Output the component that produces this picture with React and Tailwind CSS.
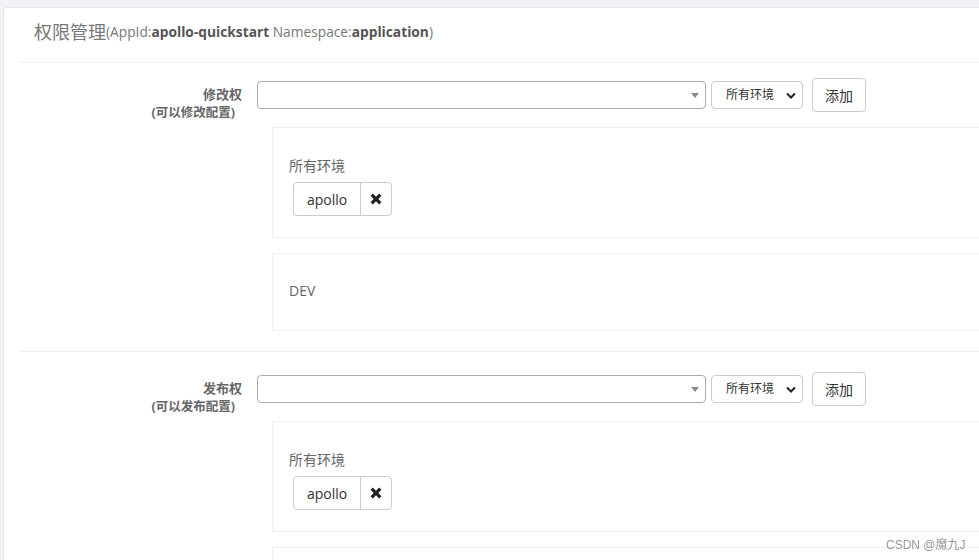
import React from 'react';

const font = { fontFamily: '"Open Sans", "Noto Sans CJK SC", sans-serif' };

const RemoveIcon = () => (
  <svg width="14" height="14" viewBox="0 0 12 12">
    <path d="M1.3 3.3 L3.3 1.3 L6 4 L8.7 1.3 L10.7 3.3 L8 6 L10.7 8.7 L8.7 10.7 L6 8 L3.3 10.7 L1.3 8.7 L4 6 Z" fill="#222" />
  </svg>
);

const Tag = ({ name }) => (
  <div className="inline-flex h-[34px] rounded border border-[#ccc] text-[14px] text-[#333]">
    <span className="flex items-center px-[13px]">{name}</span>
    <span className="flex w-[31px] items-center justify-center border-l border-[#ccc]">
      <RemoveIcon />
    </span>
  </div>
);

const EnvPanel = ({ env, users, className = '' }) => (
  <div className={`border border-[#eee] bg-white px-[16px] ${className}`}>
    <div className="text-[14px] leading-[18px] text-[#666]">{env}</div>
    {users.length > 0 && (
      <div className="mt-[7px] ml-[4px] flex gap-2">
        {users.map((u) => (
          <Tag key={u} name={u} />
        ))}
      </div>
    )}
  </div>
);

const PermRow = ({ title, sub }) => (
  <div className="flex items-start">
    <div className="w-[238px] shrink-0 pr-[15px] pt-[7px] text-right font-bold leading-[18px] text-[#666]">
      <div className="text-[13px]">{title}</div>
      <div className="mt-[1px] pr-[7px] text-[12.5px]">{sub}</div>
    </div>
    <div className="flex items-center gap-[5px]">
      <div className="relative h-[28px] w-[449px] rounded border border-[#aaa] bg-white">
        <svg className="absolute right-[6px] top-[11px]" width="8" height="5" viewBox="0 0 8 5">
          <path d="M0 0 H8 L4 5 Z" fill="#888" />
        </svg>
      </div>
      <div className="flex h-[28px] w-[92px] items-center justify-between rounded border border-[#ccc] bg-white pl-[14px] pr-[6px] text-[12px] text-[#333]">
        <span>所有环境</span>
        <svg width="10" height="7" viewBox="0 0 10 7">
          <path d="M1 1.5 L5 5.5 L9 1.5" fill="none" stroke="#222" strokeWidth="2" />
        </svg>
      </div>
      <button className="ml-[4px] h-[34px] w-[54px] rounded border border-[#ccc] bg-white text-[14px] text-[#333]">
        添加
      </button>
    </div>
  </div>
);

export default function App() {
  return (
    <div className="h-[560px] w-[979px] overflow-hidden bg-[#f1f2f6]" style={font}>
      <div className="ml-[3px] mt-[7px] h-[600px] w-[1100px] rounded-tl-[4px] border-l border-t border-[#e4e6ea] bg-white">
        <div className="flex h-[54px] items-start pl-[30px] pt-[12px] text-[#777]">
          <span className="text-[18px] leading-[24px]">权限管理</span>
          <span className="text-[13.75px] leading-[24px]">
            (AppId:<b className="text-[#555]">apollo-quickstart</b> Namespace:<b className="text-[#555]">application</b>)
          </span>
        </div>
        <div className="ml-[15px] border-t border-[#eee] pt-[15px]">
          <PermRow title="修改权" sub="(可以修改配置)" />
          <div className="ml-[253px] mt-[5px] flex flex-col gap-[15px]">
            <EnvPanel env="所有环境" users={['apollo']} className="h-[111px] pt-[29px]" />
            <EnvPanel env="DEV" users={[]} className="h-[78px] pt-[28px]" />
          </div>
          <div className="mt-[20px] border-t border-[#eee] pt-[20px]">
            <PermRow title="发布权" sub="(可以发布配置)" />
            <div className="ml-[253px] mt-[5px] flex flex-col gap-[15px]">
              <EnvPanel env="所有环境" users={['apollo']} className="h-[111px] pt-[29px]" />
              <EnvPanel env="DEV" users={[]} className="h-[78px] pt-[28px]" />
            </div>
          </div>
        </div>
      </div>
      <div className="pointer-events-none fixed left-[886px] top-[536px] text-[12px] text-[#999]" style={{ fontFamily: '"Liberation Sans", "Noto Sans CJK SC", sans-serif' }}>
        CSDN @魔九J
      </div>
    </div>
  );
}
